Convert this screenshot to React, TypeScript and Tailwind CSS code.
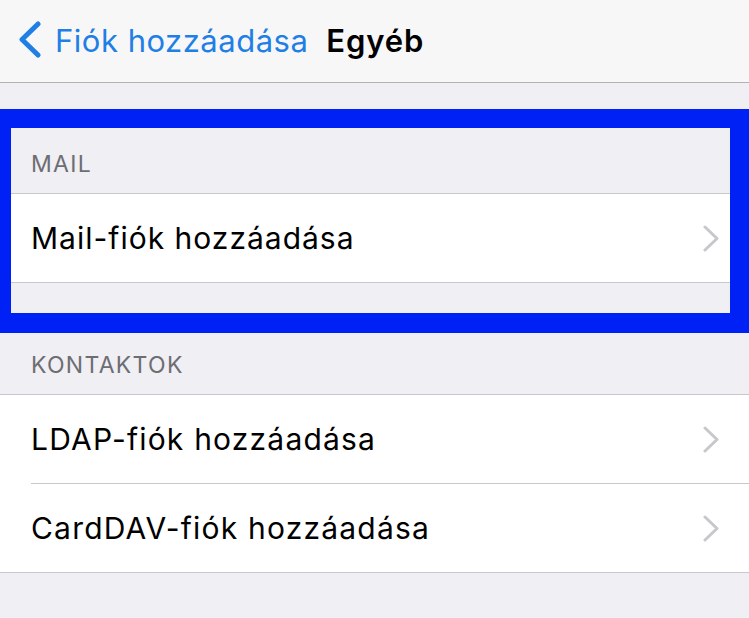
import React from 'react';

const font = { fontFamily: 'Inter, "Noto Sans", sans-serif' };

function Chevron() {
  return (
    <svg width="16" height="27" viewBox="0 0 16 27" className="shrink-0">
      <polyline points="2,2 14,13.5 2,25" fill="none" stroke="#c7c7cc" strokeWidth="3" strokeLinecap="round" strokeLinejoin="round" />
    </svg>
  );
}

function SectionHeader({ label, className }: { label: string; className?: string }) {
  return (
    <div className={`flex items-end pb-[17px] text-[23px] leading-[23px] tracking-[1.3px] text-[#6d6d72] ${className ?? ''}`}>
      {label}
    </div>
  );
}

function Row({ label }: { label: string }) {
  return (
    <div className="flex h-[88px] items-center justify-between bg-white pl-[31px] pr-[30px]">
      <span className="text-[30px] tracking-[1.2px] text-black">{label}</span>
      <Chevron />
    </div>
  );
}

export default function App() {
  return (
    <div className="h-[618px] w-[749px] overflow-hidden bg-[#efeff4]" style={font}>
      <header className="flex h-[83px] items-center border-b border-[#b2b2b2] bg-[#f7f7f8]">
        <svg width="27" height="37" viewBox="0 0 27 37" className="ml-[16px] mt-[-3px]">
          <polyline points="22,3 6,18.5 22,34" fill="none" stroke="#1f7fe5" strokeWidth="5" strokeLinecap="round" strokeLinejoin="round" />
        </svg>
        <span className="ml-[12px] text-[31px] tracking-[0.5px] text-[#1f7fe5]">Fiók hozzáadása</span>
        <span className="ml-[18px] text-[31px] font-semibold tracking-[0.9px] text-black">Egyéb</span>
      </header>

      <div className="h-[26px]" />

      <section className="border-b-[20px] border-l-[11px] border-r-[19px] border-t-[19px] border-[#0021f5]">
        <SectionHeader label="MAIL" className="h-[65px] pl-[20px]" />
        <div className="border-y border-[#c8c7cc]">
          <div className="flex h-[88px] items-center justify-between bg-white pl-[20px] pr-[11px]">
            <span className="text-[30px] tracking-[1px] text-black">Mail-fiók hozzáadása</span>
            <Chevron />
          </div>
        </div>
        <div className="h-[30px]" />
      </section>

      <SectionHeader label="KONTAKTOK" className="h-[61px] pl-[31px]" />
      <div className="border-y border-[#c8c7cc] bg-white">
        <Row label="LDAP-fiók hozzáadása" />
        <div className="ml-[31px] h-px bg-[#c8c7cc]" />
        <Row label="CardDAV-fiók hozzáadása" />
      </div>
    </div>
  );
}
